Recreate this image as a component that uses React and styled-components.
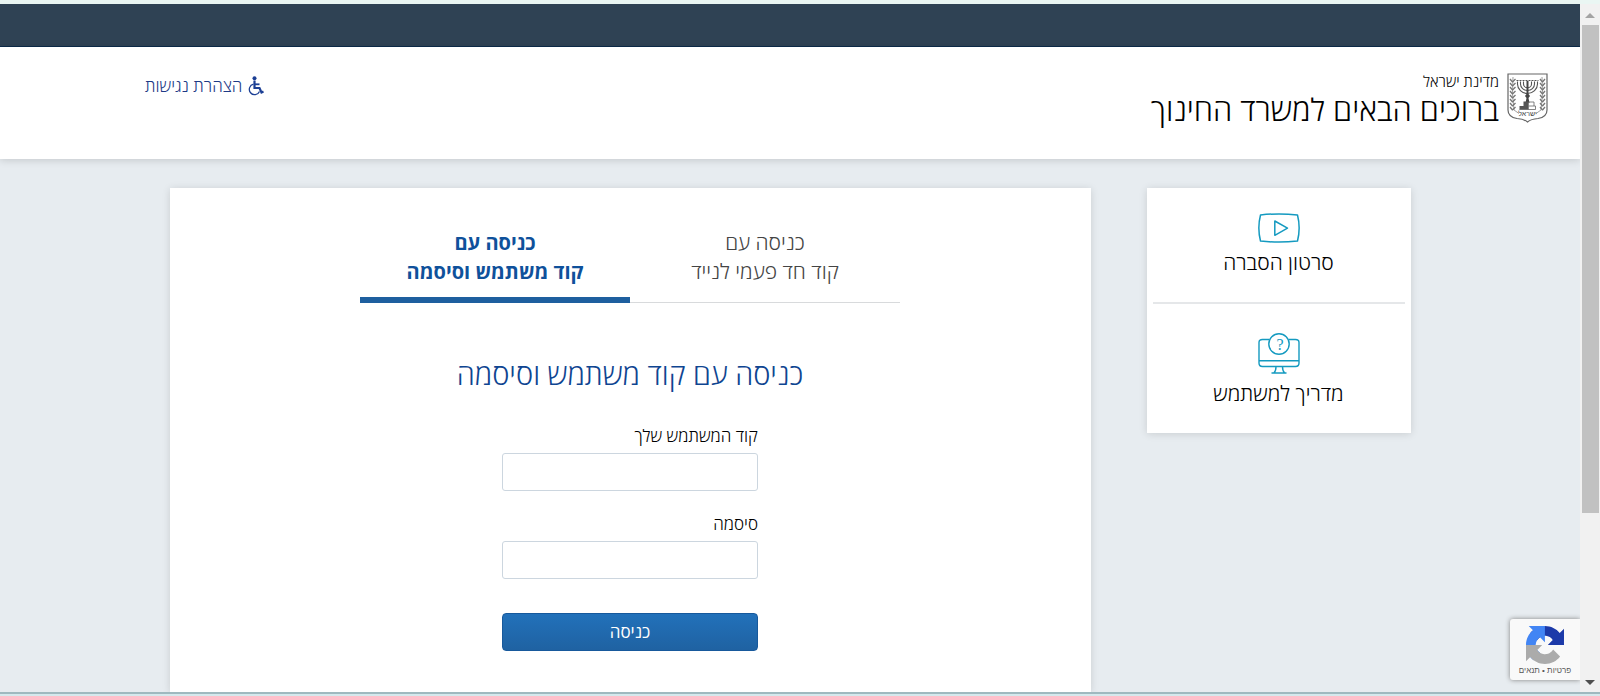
import React, { useState } from 'react'
import styled, { createGlobalStyle } from 'styled-components'

const tabs = [
  { id: 'otp', lines: ['כניסה עם', 'קוד חד פעמי לנייד'] },
  { id: 'password', lines: ['כניסה עם', 'קוד משתמש וסיסמה'] },
]

const EmblemIcon = () => (
  <svg width="41" height="50" viewBox="0 0 41 50" fill="none" stroke="#666" role="img" aria-label="סמל המדינה">
    <path d="M1 1H40V37Q40 44 31 45.500Q24 46 20.500 49Q17 46 10 45.500Q1 44 1 37Z" strokeWidth="1.200" />
    <g stroke="#555" strokeWidth="1.100">
      <path d="M10.500 8.500V11A10 9.500 0 0 0 30.500 11V8.500" />
      <path d="M13.500 8.500V11A7 6.500 0 0 0 27.500 11V8.500" />
      <path d="M16.500 8.500V11A4 3.800 0 0 0 24.500 11V8.500" />
      <path d="M9.500 7.500H31.500" strokeDasharray="2 1" />
    </g>
    <path d="M19.500 8H21.500V21L23 23L21.500 25L22.500 30H18.500L19.500 25L18 23L19.500 21Z" fill="#444" stroke="none" />
    <path d="M16.500 28.500H21V33H16.500ZM12.500 33H21V36.500H12.500Z" fill="#555" stroke="none" />
    <path d="M21.500 29H27V33M21.500 33H28.500V36.500H12.500M21.500 29V36.500" strokeWidth=".8" />
    <g strokeWidth="1.300" stroke="#777">
      <path d="M6 4Q4.500 21 7 37L12 40.500M35 4Q36.500 21 34 37L29 40.500" strokeWidth=".7" />
      {[6, 10, 14, 18, 22, 26, 30, 34].map(y => (
        <path
          key={y}
          d={`M5.500 ${y + 3}L3 ${y}M5.500 ${y + 3}L8.500 ${y}M35.500 ${y + 3}L33 ${y}M35.500 ${y + 3}L38 ${y}`}
        />
      ))}
    </g>
    <text
      x="20.500"
      y="43"
      textAnchor="middle"
      fontFamily="Liberation Sans, sans-serif"
      fontSize="7"
      fill="#444"
      stroke="none"
    >
      ישראל
    </text>
  </svg>
)

const WheelchairIcon = () => (
  <svg width="16" height="20" viewBox="0 0 16 20" fill="none" stroke="#1c3f94" aria-hidden="true">
    <circle cx="6.500" cy="2.200" r="2" fill="#1c3f94" stroke="none" />
    <path d="M6.500 4.500V12H11.500L13.500 16.500L15.500 15.500" strokeWidth="2.200" />
    <path d="M7 8.300H11.500" strokeWidth="1.800" />
    <path d="M5.500 8.200A5.300 5.300 0 1 0 11.500 15.500" strokeWidth="1.300" />
  </svg>
)

const VideoIcon = () => (
  <svg width="42" height="30" viewBox="0 0 42 30" fill="none" stroke="#149ac0" strokeWidth="1.500" strokeLinejoin="round" aria-hidden="true">
    <path d="M2.500 2Q21 -.2 39.500 2Q42.800 15 39.500 28Q21 30.200 2.500 28Q-.8 15 2.500 2Z" />
    <path d="M16.800 8V22.300L29.500 15.200Z" />
  </svg>
)

const GuideIcon = () => (
  <svg width="42" height="41" viewBox="0 0 42 41" fill="none" stroke="#149ac0" strokeWidth="1.400" aria-hidden="true">
    <path d="M11 6.500H4.500Q1 6.500 1 9.500V30Q1 33.500 4.500 33.500H37.500Q41 33.500 41 30V9.500Q41 6.500 37.500 6.500H31" />
    <path d="M1 27.700H41" />
    <path d="M18 33.500Q18 38 16 39.800M24.500 33.500Q24.500 38 26.500 39.800M13.500 40H28.500" />
    <circle cx="21" cy="11" r="10.200" />
    <text x="22" y="17" textAnchor="middle" fontFamily="Liberation Serif, serif" fontSize="16" fill="#149ac0" stroke="none">
      ?
    </text>
  </svg>
)

const RecaptchaIcon = () => (
  <svg width="38" height="38" viewBox="0 0 64 64" aria-hidden="true">
    <path
      fill="#1c3aa9"
      d="M64 31.955l-.033-1.37V4.687l-7.160 7.160C50.948 4.674 42.033.093 32.050.093c-10.400 0-19.630 4.960-25.458 12.640l11.736 11.860a15.550 15.550 0 0 1 4.754-5.334c2.050-1.600 4.952-2.906 8.968-2.906.485 0 .86.057 1.135.163 4.976.393 9.288 3.140 11.828 7.124l-8.307 8.307L64 31.953"
    />
    <path
      fill="#4285f4"
      d="M31.862.094l-1.370.033H4.594l7.160 7.160C4.580 13.147 0 22.060 0 32.046c0 10.400 4.960 19.630 12.640 25.458L24.500 45.768a15.550 15.550 0 0 1-5.334-4.754c-1.600-2.050-2.906-4.952-2.906-8.968 0-.485.057-.86.163-1.135.393-4.976 3.140-9.288 7.124-11.828l8.307 8.307L31.860.095"
    />
    <path
      fill="#ababab"
      d="M.001 32.045l.033 1.370v25.898l7.160-7.160c5.860 7.173 14.774 11.754 24.760 11.754 10.400 0 19.630-4.960 25.458-12.640l-11.736-11.860a15.550 15.550 0 0 1-4.754 5.334c-2.050 1.600-4.952 2.906-8.968 2.906-.485 0-.86-.057-1.135-.163-4.976-.393-9.288-3.140-11.828-7.124l8.307-8.307c-10.522.040-22.400.066-27.295-.005"
    />
  </svg>
)

const Header = () => (
  <StyledHeader>
    <Brand>
      <EmblemIcon />
      <div>
        <StateName>מדינת ישראל</StateName>
        <SiteTitle>ברוכים הבאים למשרד החינוך</SiteTitle>
      </div>
    </Brand>
    <AccessibilityLink href="#accessibility">
      <WheelchairIcon />
      הצהרת נגישות
    </AccessibilityLink>
  </StyledHeader>
)

const HelpLinks = () => (
  <HelpCard>
    <HelpLink href="#video">
      <VideoIcon />
      סרטון הסברה
    </HelpLink>
    <Divider />
    <HelpLink href="#guide">
      <GuideIcon />
      מדריך למשתמש
    </HelpLink>
  </HelpCard>
)

const Login = () => {
  const [active, setActive] = useState('password')

  return (
    <LoginCard>
      <TabList role="tablist">
        {tabs.map(({ id, lines }) => (
          <Tab
            key={id}
            type="button"
            role="tab"
            aria-selected={active === id}
            $active={active === id}
            onClick={() => setActive(id)}
          >
            {lines.map(line => (
              <TabLine key={line}>{line}</TabLine>
            ))}
          </Tab>
        ))}
      </TabList>
      <LoginTitle>כניסה עם קוד משתמש וסיסמה</LoginTitle>
      <Form onSubmit={e => e.preventDefault()}>
        <Field>
          <Label htmlFor="user">קוד המשתמש שלך</Label>
          <Input id="user" type="text" />
        </Field>
        <Field>
          <Label htmlFor="password">סיסמה</Label>
          <Input id="password" type="password" />
        </Field>
        <Submit type="submit">כניסה</Submit>
      </Form>
    </LoginCard>
  )
}

const App = () => (
  <Frame>
    <GlobalStyle />
    <Viewport>
      <Page>
        <TopBar />
        <Header />
        <Content>
          <HelpLinks />
          <Login />
        </Content>
        <Recaptcha>
          <RecaptchaIcon />
          <RecaptchaLinks>
            <a href="#privacy">פרטיות</a> • <a href="#terms">תנאים</a>
          </RecaptchaLinks>
        </Recaptcha>
      </Page>
      <ScrollTrack aria-hidden="true">
        <ScrollArrow viewBox="0 0 20 20">
          <path d="M5 14L10 9L15 14Z" fill="#a3a3a3" />
        </ScrollArrow>
        <ScrollThumb />
        <ScrollArrow viewBox="0 0 20 20">
          <path d="M5 8L10 13L15 8Z" fill="#505050" />
        </ScrollArrow>
      </ScrollTrack>
    </Viewport>
  </Frame>
)

export default App

const GlobalStyle = createGlobalStyle`
  * {
    box-sizing: border-box;
  }
  body {
    margin: 0;
    font-family: 'Open Sans', 'Noto Sans', sans-serif;
    color: #000;
  }
  a {
    color: inherit;
    text-decoration: none;
  }
  button, input {
    font: inherit;
  }
`

const Frame = styled.div`
  height: 100vh;
  display: flex;
  flex-direction: column;
  border-top: 4px solid #eaf6f3;
  border-bottom: 2px solid #d5e9ed;
`

const Viewport = styled.div`
  flex: 1;
  min-height: 0;
  display: flex;
  border-bottom: 2px solid #9fb9bf;
`

const Page = styled.div`
  position: relative;
  flex: 1;
  display: flex;
  flex-direction: column;
  direction: rtl;
  overflow: hidden;
  background: #e7ecf0;
`

const TopBar = styled.div`
  flex: none;
  height: 43px;
  background: #2f4254;
  border-bottom: 1px solid #0c2b4b;
`

const StyledHeader = styled.header`
  flex: none;
  height: 112px;
  display: flex;
  justify-content: space-between;
  align-items: flex-start;
  padding: 26px 32px 0 145px;
  background: #fff;
  box-shadow: 0 1px 8px rgba(0, 0, 0, 0.16);
`

const Brand = styled.div`
  display: flex;
  gap: 8px;
`

const StateName = styled.div`
  font-size: 15px;
  line-height: 16px;
  font-weight: 300;
`

const SiteTitle = styled.h1`
  margin: 0;
  font-size: 31px;
  line-height: 40px;
  font-weight: 300;
`

const AccessibilityLink = styled.a`
  display: flex;
  align-items: center;
  gap: 6px;
  font-size: 17px;
  line-height: 26px;
  font-weight: 300;
  color: #1d3a86;
`

const Content = styled.main`
  display: flex;
  align-items: flex-start;
  gap: 56px;
  flex: 1;
  width: 100%;
  max-width: 1241px;
  margin: 0 auto;
  padding-top: 29px;
`

const Card = styled.section`
  background: #fff;
  box-shadow: 0 1px 8px rgba(0, 0, 0, 0.13);
`

const HelpCard = styled(Card)`
  flex: none;
  width: 264px;
  padding: 25px 6px;
`

const HelpLink = styled.a`
  display: flex;
  flex-direction: column;
  align-items: center;
  gap: 5px;
  font-size: 21px;
  line-height: 29px;
  font-weight: 300;
`

const Divider = styled.hr`
  margin: 25px 0 29px;
  border: 0;
  border-top: 2px solid #e5e7e9;
`

const LoginCard = styled(Card)`
  flex: 1;
  align-self: stretch;
  display: flex;
  flex-direction: column;
  align-items: center;
  padding-top: 40px;
`

const TabList = styled.div`
  display: flex;
  width: 540px;
  border-bottom: 1px solid #d8dadc;
`

const Tab = styled.button`
  flex: 1;
  height: 75px;
  margin-bottom: -1px;
  padding: 0 0 12px;
  border: 0;
  border-bottom: 6px solid ${({ $active }) => ($active ? '#1e5f9f' : 'transparent')};
  background: none;
  font-size: ${({ $active }) => ($active ? '20px' : '21px')};
  line-height: 29px;
  font-weight: ${({ $active }) => ($active ? '700' : '300')};
  color: ${({ $active }) => ($active ? '#0f519b' : '#444')};
  cursor: pointer;
`

const TabLine = styled.span`
  display: block;
`

const LoginTitle = styled.h2`
  margin: 51px 0 30px;
  font-size: 29px;
  line-height: 40px;
  font-weight: 300;
  color: #0f4591;
`

const Form = styled.form`
  width: 256px;
`

const Field = styled.div`
  margin-bottom: 21px;
`

const Label = styled.label`
  display: block;
  padding-bottom: 5px;
  font-size: 17px;
  line-height: 24px;
  font-weight: 300;
`

const Input = styled.input`
  display: block;
  width: 100%;
  height: 38px;
  padding: 0 10px;
  border: 1px solid #ccd6df;
  border-radius: 3px;
  background: #fff;
`

const Submit = styled.button`
  width: 100%;
  height: 38px;
  margin-top: 13px;
  border: 1px solid #17599c;
  border-radius: 4px;
  background: linear-gradient(#2271ba, #1f62a2);
  color: #fff;
  font-size: 17px;
  line-height: 24px;
  cursor: pointer;
`

const Recaptcha = styled.div`
  position: absolute;
  bottom: 12px;
  right: 0;
  width: 70px;
  height: 61px;
  padding-top: 7px;
  display: flex;
  flex-direction: column;
  align-items: center;
  gap: 2px;
  border-radius: 3px 0 0 3px;
  background: #f9f9f9;
  box-shadow: 0 0 5px #808080;
`

const RecaptchaLinks = styled.div`
  font-family: 'Liberation Sans', Arial, sans-serif;
  font-size: 8px;
  line-height: 10px;
  color: #555;
  white-space: nowrap;
`

const ScrollTrack = styled.div`
  flex: none;
  width: 20px;
  display: flex;
  flex-direction: column;
  background: #f1f1f1;
`

const ScrollArrow = styled.svg`
  flex: none;
  width: 20px;
  height: 20px;
`

const ScrollThumb = styled.div`
  height: 71%;
  margin: 1px 1px auto 2px;
  background: #c1c1c1;
`
